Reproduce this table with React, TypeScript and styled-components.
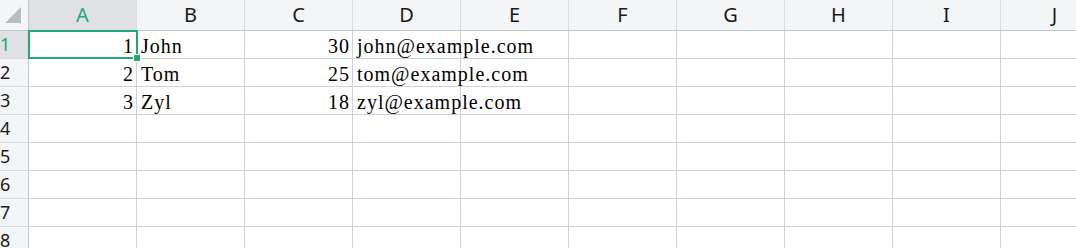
import { Fragment } from 'react';
import styled, { createGlobalStyle } from 'styled-components';

const COLS = ['A', 'B', 'C', 'D', 'E', 'F', 'G', 'H', 'I', 'J'];
const ROW_COUNT = 8;

type CellValue = string | number;

const data: CellValue[][] = [
  [1, 'John', 30, 'john@example.com'],
  [2, 'Tom', 25, 'tom@example.com'],
  [3, 'Zyl', 18, 'zyl@example.com'],
];

const accent = '#22a874';
const gridLine = '#ccd1df';
const headerLine = '#c0c7d7';

const GlobalStyle = createGlobalStyle`
  html, body {
    margin: 0;
    padding: 0;
    background: #ffffff;
    overflow: hidden;
  }
`;

const Sheet = styled.div`
  position: relative;
  display: grid;
  grid-template-columns: 29px repeat(${COLS.length}, 108px);
  grid-template-rows: 31px repeat(${ROW_COUNT}, 28px);
  width: max-content;
`;

const Corner = styled.div`
  box-sizing: border-box;
  background: #f4f5f7;
  border-right: 1px solid ${headerLine};
  border-bottom: 1px solid ${headerLine};
  display: flex;
  align-items: flex-start;
  justify-content: flex-start;
  padding: 7px 0 0 5px;
`;

const ColHeader = styled.div<{ $active?: boolean }>`
  box-sizing: border-box;
  background: ${(p) => (p.$active ? '#dfe1e5' : '#f4f5f7')};
  border-right: 1px solid #d9dce5;
  border-bottom: 1px solid ${headerLine};
  display: flex;
  align-items: center;
  justify-content: center;
  font-family: 'Noto Sans', 'Open Sans', sans-serif;
  font-size: 20px;
  line-height: 30px;
  color: ${(p) => (p.$active ? accent : '#1a1a1a')};
`;

const RowHeader = styled.div<{ $active?: boolean }>`
  box-sizing: border-box;
  background: ${(p) => (p.$active ? '#dfe1e5' : '#f4f5f7')};
  border-right: 1px solid ${headerLine};
  border-bottom: 1px solid #d9dce5;
  display: flex;
  align-items: center;
  padding-left: 0;
  font-family: 'Noto Sans', 'Open Sans', sans-serif;
  font-size: 18px;
  line-height: 27px;
  color: ${(p) => (p.$active ? accent : '#1a1a1a')};
`;

const Cell = styled.div<{ $numeric?: boolean }>`
  box-sizing: border-box;
  border-right: 1px solid ${gridLine};
  border-bottom: 1px solid ${gridLine};
  display: flex;
  align-items: flex-end;
  justify-content: ${(p) => (p.$numeric ? 'flex-end' : 'flex-start')};
  padding: 0 ${(p) => (p.$numeric ? '2px' : '0')} 1px ${(p) => (p.$numeric ? '0' : '4px')};
  font-family: 'Liberation Serif', 'Times New Roman', serif;
  font-size: 20px;
  letter-spacing: 1px;
  line-height: 22px;
  color: #000000;
  white-space: nowrap;
  min-width: 0;
`;

const Selection = styled.div`
  position: absolute;
  left: 28px;
  top: 30px;
  width: 110px;
  height: 29px;
  box-sizing: border-box;
  border: 2px solid ${accent};
  pointer-events: none;
`;

const FillHandle = styled.div`
  position: absolute;
  left: 133px;
  top: 54px;
  width: 6px;
  height: 6px;
  background: ${accent};
  border: 1px solid #ffffff;
`;

const CornerMark = () => (
  <svg width="17" height="17" viewBox="0 0 17 17">
    <polygon points="16,0 16,16 0,16" fill="#b9bcc3" />
  </svg>
);

const App = () => {
  const rows = Array.from({ length: ROW_COUNT }, (_, r) => r);

  return (
    <>
      <GlobalStyle />
      <Sheet>
        <Corner>
          <CornerMark />
        </Corner>
        {COLS.map((c, i) => (
          <ColHeader key={c} $active={i === 0}>
            {c}
          </ColHeader>
        ))}
        {rows.map((r) => (
          <Fragment key={r}>
            <RowHeader $active={r === 0}>{r + 1}</RowHeader>
            {COLS.map((c, ci) => {
              const value = data[r]?.[ci];
              return (
                <Cell key={c} $numeric={typeof value === 'number'}>
                  {value ?? ''}
                </Cell>
              );
            })}
          </Fragment>
        ))}
        <Selection />
        <FillHandle />
      </Sheet>
    </>
  );
};

export default App;
